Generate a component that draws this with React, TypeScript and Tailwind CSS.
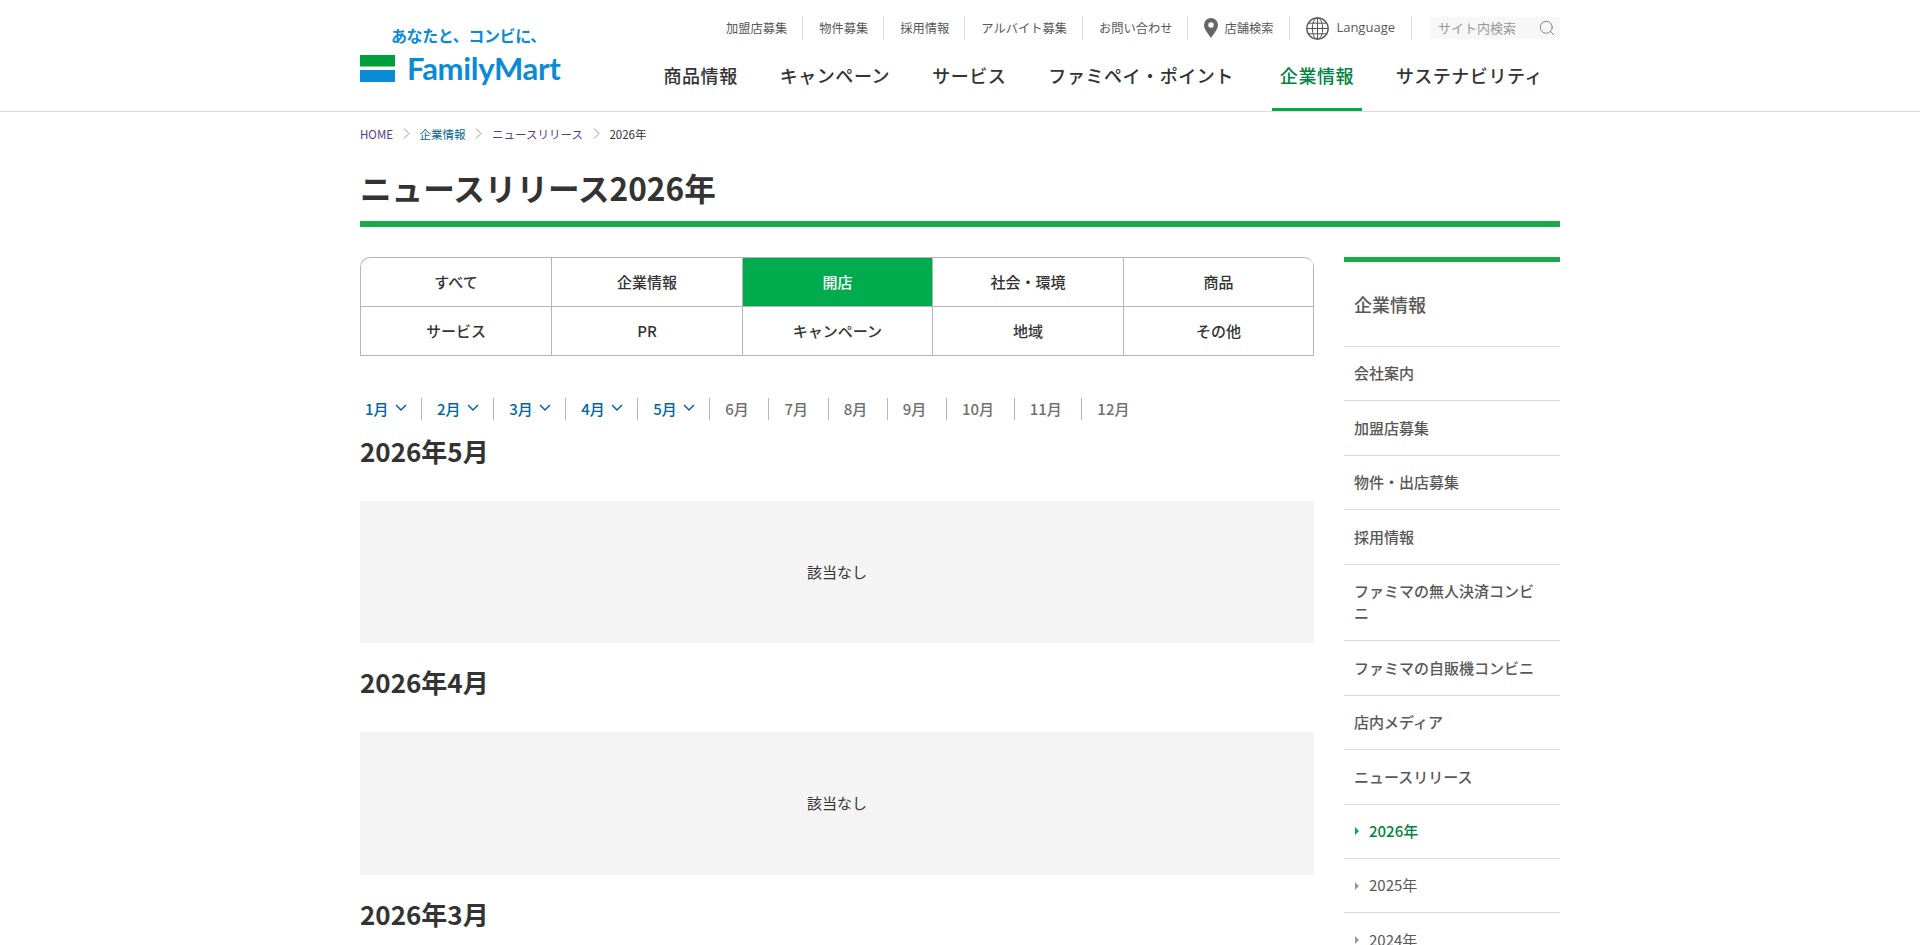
import { Search } from "lucide-react";

const topLinks = ["加盟店募集", "物件募集", "採用情報", "アルバイト募集", "お問い合わせ"];
const mainNav = ["商品情報", "キャンペーン", "サービス", "ファミペイ・ポイント", "企業情報", "サステナビリティ"];
const tabs = ["すべて", "企業情報", "開店", "社会・環境", "商品", "サービス", "PR", "キャンペーン", "地域", "その他"];
const months = ["1月", "2月", "3月", "4月", "5月", "6月", "7月", "8月", "9月", "10月", "11月", "12月"];
const sideLinks = [
  "会社案内",
  "加盟店募集",
  "物件・出店募集",
  "採用情報",
  "ファミマの無人決済コンビニ",
  "ファミマの自販機コンビニ",
  "店内メディア",
  "ニュースリリース",
];
const years = ["2026年", "2025年", "2024年"];
const sections = ["2026年5月", "2026年4月", "2026年3月"];
const crumbs = [
  { label: "HOME", color: "text-[#5b3a8c]" },
  { label: "企業情報", color: "text-[#00648f]" },
  { label: "ニュースリリース", color: "text-[#5b3a8c]" },
];

const Logo = () => (
  <div className="w-[200px] pt-[25px]">
    <p className="ml-[31px] text-[16px] leading-[20px] font-bold tracking-[-0.4px] whitespace-nowrap text-[#0a8bd6]">
      あなたと、コンビに、
    </p>
    <div className="mt-[8px] flex items-start">
      <svg width="35" height="27" viewBox="0 0 35 27" className="mt-[2px] shrink-0">
        <rect width="35" height="11.5" fill="#009f3c" />
        <rect y="15" width="35" height="12" fill="#0a8bd6" />
      </svg>
      <span className="-mt-[1px] ml-[12px] font-['Lato',sans-serif] text-[31px] leading-[32px] font-bold tracking-[-0.3px] text-[#0a8bd6]">
        FamilyMart
      </span>
    </div>
  </div>
);

const PinIcon = () => (
  <svg width="14" height="20" viewBox="0 0 14 20" className="shrink-0">
    <path
      fillRule="evenodd"
      d="M7 0a7 7 0 0 1 7 7c0 4-4 8.500-7 13C4 15.500 0 11 0 7a7 7 0 0 1 7-7Zm0 4.300a2.700 2.700 0 1 0 0 5.400 2.700 2.700 0 0 0 0-5.400Z"
      fill="#666"
    />
  </svg>
);

const GlobeIcon = () => (
  <svg width="23" height="23" viewBox="0 0 23 23" fill="none" stroke="#555" strokeWidth="1" className="shrink-0">
    <circle cx="11.500" cy="11.500" r="10.700" strokeWidth="1.300" />
    <ellipse cx="11.500" cy="11.500" rx="5.200" ry="10.700" />
    <path d="M11.500 1v21M1 11.500h21M2.400 6.200h18.200M2.400 16.800h18.200" />
  </svg>
);

const Header = () => (
  <header className="h-[112px] border-b border-[#dcdcdc]">
    <div className="mx-auto flex w-[1200px] justify-between">
      <Logo />
      <div className="flex flex-col items-end">
        <div className="mt-[16px] flex h-[24px] items-center text-[12.250px] text-[#595757]">
          {topLinks.map((link) => (
            <a key={link} className="flex h-full items-center border-r border-[#dcdcdc] pr-[15px] pl-[16px]">
              {link}
            </a>
          ))}
          <a className="flex h-full items-center gap-[6px] border-r border-[#dcdcdc] pr-[16px] pl-[16px]">
            <PinIcon />
            店舗検索
          </a>
          <a className="flex h-full items-center gap-[7px] border-r border-[#dcdcdc] pr-[16px] pl-[16px] font-['Open_Sans',sans-serif] text-[13px]">
            <GlobeIcon />
            Language
          </a>
          <div className="ml-[18px] flex h-[22px] w-[130px] items-center justify-between rounded-[2px] bg-[#f7f7f7] pr-[4px] pl-[8px]">
            <span className="text-[13px] text-[#999]">サイト内検索</span>
            <Search size={18} strokeWidth={1} className="text-[#666]" />
          </div>
        </div>
        <nav className="mt-[23px] mr-[17px] flex gap-[42px] text-[18px] leading-[24px] font-medium tracking-[0.55px] text-[#333]">
          {mainNav.map((item) => (
            <a key={item} className={item === "企業情報" ? "relative ml-[4px] text-[#00833e]" : ""}>
              {item}
              {item === "企業情報" && (
                <span className="absolute top-[45px] -right-[8px] -left-[8px] h-[3px] bg-[#00ab4e]" />
              )}
            </a>
          ))}
        </nav>
      </div>
    </div>
  </header>
);

const TabGrid = () => (
  <ul className="grid grid-cols-[191px_191px_190px_191px_1fr] overflow-hidden rounded-t-[10px] border-t border-l border-[#b5b5b5]">
    {tabs.map((tab) => (
      <li
        key={tab}
        className={`flex h-[49px] items-center justify-center border-r border-b border-[#b5b5b5] text-[15px] font-medium ${
          tab === "開店" ? "bg-[#00ab4e] text-white" : "text-[#333]"
        }`}
      >
        {tab}
      </li>
    ))}
  </ul>
);

const MonthNav = () => (
  <ul className="mt-[42px] flex text-[15px] leading-[22px] font-medium">
    {months.map((month, i) => (
      <li
        key={month}
        className={`flex items-center ${i === 11 ? "" : "border-r border-[#b5b5b5]"} ${
          i === 0 ? "pl-[5px]" : "pl-[15px]"
        } ${i < 5 ? "pr-[14.500px] text-[#00689f]" : "pr-[19.600px] text-[#707070]"}`}
      >
        {month}
        {i < 5 && (
          <svg width="12" height="8" viewBox="0 0 12 8" fill="none" stroke="#00689f" strokeWidth="1.500" className="mb-[3px] ml-[6px]">
            <path d="M1 1l5 5 5-5" />
          </svg>
        )}
      </li>
    ))}
  </ul>
);

const Sidebar = () => (
  <aside className="w-[216px] shrink-0 border-t-[5px] border-[#1aaa4b]">
    <h2 className="flex h-[85px] items-center border-b border-[#dcdcdc] pl-[10px] text-[18px] font-medium text-[#595757]">
      企業情報
    </h2>
    <ul className="text-[15px] leading-[22.500px] font-medium text-[#595757]">
      {sideLinks.map((link) => (
        <li key={link} className="border-b border-[#dcdcdc] py-[15.450px] pr-[16px] pl-[10px]">
          {link}
        </li>
      ))}
      {years.map((year) => (
        <li key={year} className="flex items-center border-b border-[#dcdcdc] py-[15.450px] pl-[11px]">
          <span
            className={`mr-[10px] h-0 w-0 border-y-[4px] border-l-[4px] border-y-transparent ${
              year === "2026年" ? "border-l-[#00ab4e]" : "border-l-[#999]"
            }`}
          />
          <span className={year === "2026年" ? "text-[#00833e]" : "font-normal"}>{year}</span>
        </li>
      ))}
    </ul>
  </aside>
);

export default function App() {
  return (
    <div className="h-screen overflow-hidden bg-white font-['Noto_Sans_CJK_JP',sans-serif]">
      <Header />
      <main className="mx-auto w-[1200px]">
        <ol className="flex h-[45px] items-center text-[11.500px] text-[#333]">
          {crumbs.map((crumb) => (
            <li key={crumb.label} className="flex items-center">
              <span className={crumb.color}>{crumb.label}</span>
              <svg width="7" height="11" viewBox="0 0 7 11" fill="none" stroke="#999" className="mx-[9.750px] mb-[2px]">
                <path d="M1 .5l5 5-5 5" />
              </svg>
            </li>
          ))}
          <li>2026年</li>
        </ol>
        <h1 className="flex h-[70px] items-center border-b-[6px] border-[#1aaa4b] pb-[2px] text-[31.600px] font-bold text-[#333]">
          ニュースリリース2026年
        </h1>
        <div className="mt-[30px] flex justify-between">
          <div className="w-[954px]">
            <TabGrid />
            <MonthNav />
            <div className="mt-[11px] flex flex-col gap-[19px]">
              {sections.map((section) => (
                <section key={section}>
                  <h2 className="text-[26px] leading-[40px] font-bold text-[#333]">{section}</h2>
                  <div className="mt-[30px] flex h-[142.400px] items-center justify-center bg-[#f4f4f4] text-[15px] text-[#333]">
                    該当なし
                  </div>
                </section>
              ))}
            </div>
          </div>
          <Sidebar />
        </div>
      </main>
    </div>
  );
}
